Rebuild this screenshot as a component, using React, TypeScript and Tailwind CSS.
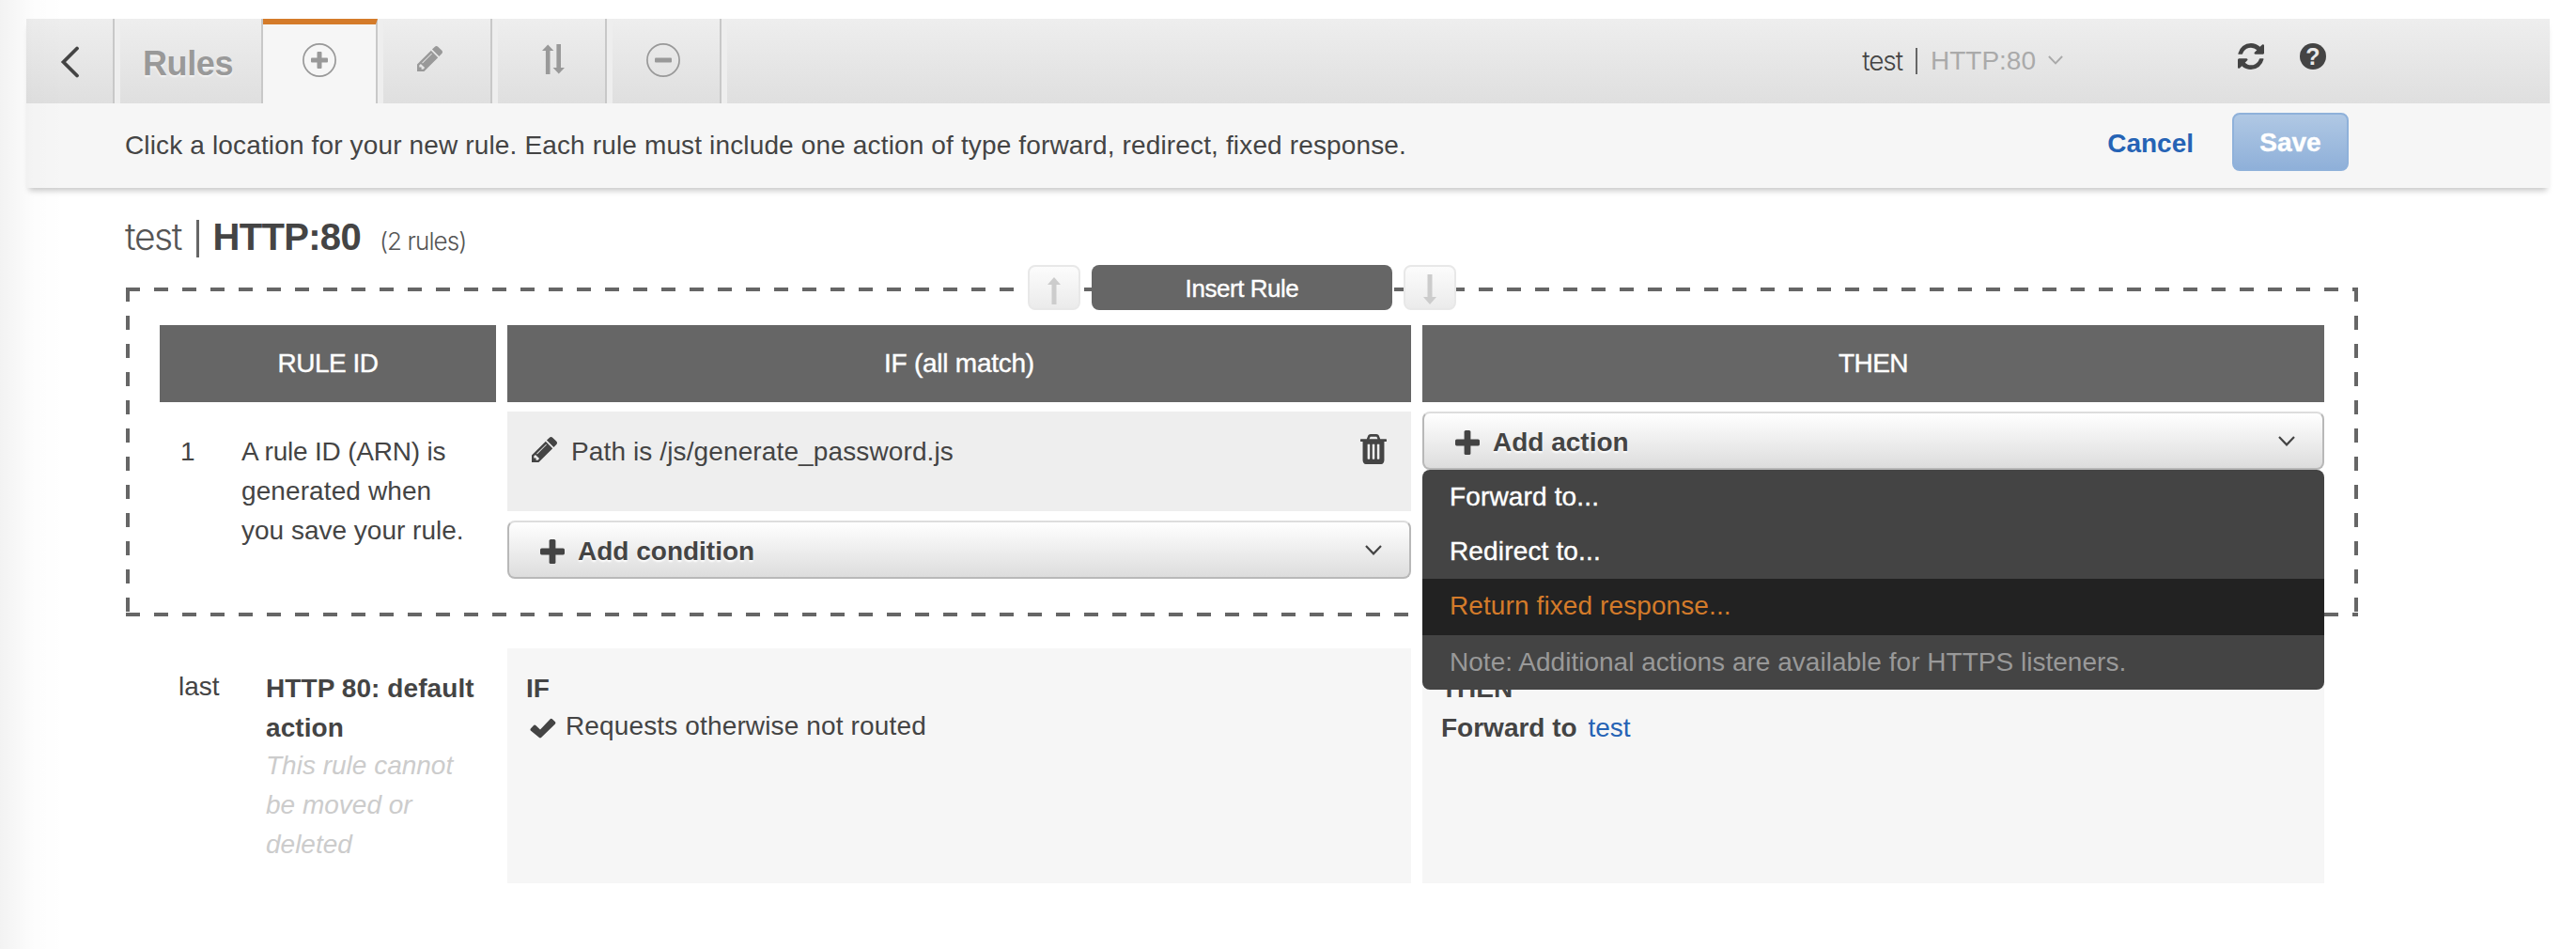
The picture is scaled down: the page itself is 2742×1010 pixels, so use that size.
import React from "react";

const PENCIL =
  "M491 1536l91-91-235-235-91 91v107h128v128h107zm523-928q0-22-22-22-10 0-17 7l-542 542q-7 7-7 17 0 22 22 22 10 0 17-7l542-542q7-7 7-17zm-54-192l416 416-832 832h-416v-416zm683 96q0 53-37 90l-166 166-416-416 166-165q36-38 90-38 53 0 91 38l235 234q37 39 37 91z";
const TRASH =
  "M704 1376v-704q0-14-9-23t-23-9h-64q-14 0-23 9t-9 23v704q0 14 9 23t23 9h64q14 0 23-9t9-23zm256 0v-704q0-14-9-23t-23-9h-64q-14 0-23 9t-9 23v704q0 14 9 23t23 9h64q14 0 23-9t9-23zm256 0v-704q0-14-9-23t-23-9h-64q-14 0-23 9t-9 23v704q0 14 9 23t23 9h64q14 0 23-9t9-23zm-544-992h448l-48-117q-7-9-17-11h-317q-10 2-17 11zm928 32v64q0 14-9 23t-23 9h-96v948q0 83-47 143.5t-113 60.5h-832q-66 0-113-58.5t-47-141.5v-952h-96q-14 0-23-9t-9-23v-64q0-14 9-23t23-9h309l70-167q15-37 54-63t79-26h320q40 0 79 26t54 63l70 167h309q14 0 23 9t9 23z";
const REFRESH =
  "M1639 1056q0 5-1 7-64 268-268 434.5t-478 166.5q-146 0-282.5-55t-243.5-157l-129 129q-19 19-45 19t-45-19-19-45v-448q0-26 19-45t45-19h448q26 0 45 19t19 45-19 45l-137 137q71 66 161 102t187 36q134 0 250-65t186-179q11-17 53-117 8-23 30-23h192q13 0 22.5 9.5t9.5 22.5zm25-800v448q0 26-19 45t-45 19h-448q-26 0-45-19t-19-45 19-45l138-138q-148-137-349-137-134 0-250 65t-186 179q-11 17-53 117-8 23-30 23h-199q-13 0-22.5-9.5t-9.5-22.5v-7q65-268 270-434.5t480-166.5q146 0 284 55.5t245 156.5l130-129q19-19 45-19t45 19 19 45z";

function Glyph({ d, box, className }: { d: string; box: string; className: string }) {
  return (
    <svg viewBox={box} className={className} fill="currentColor" preserveAspectRatio="none">
      <path d={d} />
    </svg>
  );
}

function Pencil({ className }: { className: string }) {
  return <Glyph d={PENCIL} box="128 149 1515 1515" className={className} />;
}

function Chevron({ className, stroke = 2.2 }: { className: string; stroke?: number }) {
  return (
    <svg viewBox="0 0 18 11" className={className} fill="none" stroke="currentColor" strokeWidth={stroke}>
      <path d="M1 1l8 8.3L17 1" />
    </svg>
  );
}

function CircleIcon({ plus }: { plus?: boolean }) {
  return (
    <svg viewBox="0 0 36 36" className="size-9" fill="#999">
      <circle cx="18" cy="18" r="17.1" fill="none" stroke="#999" strokeWidth="1.7" />
      <rect x="9" y="15.500" width="18" height="5" rx="1" />
      {plus && <rect x="15.500" y="9" width="5" height="18" rx="1" />}
    </svg>
  );
}

function Plus({ className }: { className: string }) {
  return (
    <svg viewBox="0 0 26 26" className={className} fill="#444">
      <rect x="9.6" y="0" width="6.8" height="26" rx="1.6" />
      <rect x="0" y="9.6" width="26" height="6.8" rx="1.6" />
    </svg>
  );
}

const TAB =
  "flex h-[90px] w-[122px] shrink-0 justify-center border-r-2 border-[#c8c8c8] pt-[26px] text-[#999] shadow-[inset_6px_0_0_#eeeeee]";

function Toolbar() {
  return (
    <div className="flex h-[90px] bg-linear-to-b from-[#eeeeee] to-[#dfdfdf]">
      <div className="flex h-[90px] w-[94px] shrink-0 border-r-2 border-[#c8c8c8] pl-[36px] pt-[29px]">
        <svg
          viewBox="0 0 22 34"
          className="h-[34px] w-[22px]"
          fill="none"
          stroke="#444"
          strokeWidth="3.8"
          strokeLinecap="round"
        >
          <path d="M18 2.500L3.500 17l14.500 14.500" />
        </svg>
      </div>
      <div className="h-[90px] w-[158px] shrink-0 border-r-2 border-[#c8c8c8] pl-[30px] pt-[27px] text-[36px] leading-[42px] font-bold tracking-[-0.4px] text-[#999] shadow-[inset_6px_0_0_#eeeeee] [text-shadow:0_2px_2px_#f4f4f4]">
        Rules
      </div>
      <div className="flex h-[90px] w-[122px] shrink-0 justify-center border-t-[6px] border-r-2 border-t-[#d47b2a] border-r-[#c8c8c8] bg-[#f6f6f6] pt-5">
        <CircleIcon plus />
      </div>
      <div className={TAB}>
        <Pencil className="mt-[3px] ml-[-10px] size-[27px]" />
      </div>
      <div className={TAB}>
        <svg viewBox="0 0 24 32" className="mt-[1px] mr-[-10px] h-8 w-6" fill="#999">
          <path d="M6.200 0.500L12.400 7H8.500V32H3.900V7H0Z" />
          <path d="M17.800 31.500L24 25H20V0H15.400V25H11.600Z" />
        </svg>
      </div>
      <div className={TAB}>
        <CircleIcon />
      </div>
      <div className="flex grow shadow-[inset_6px_0_0_#eeeeee]">
        <div className="ml-auto flex pt-6 pr-[238px] text-[28px] leading-[42px]">
          <span className="font-['Inter'] font-light tracking-[-1.1px] text-[#444]">test</span>
          <span className="ml-[14px] mr-[14px] mt-[7px] h-7 w-0.5 bg-[#666]" />
          <span className="mr-[13px] text-[#aaa]">HTTP:80</span>
          <Chevron className="mt-[15px] mr-[186px] h-[10px] w-4 text-[#aaa]" />
          <Glyph d={REFRESH} box="128 128 1536 1536" className="mt-[2px] mr-[38px] size-7 text-[#444]" />
          <span className="mt-[2px] flex size-7 items-center justify-center rounded-full bg-[#444] text-[25px] leading-7 font-bold text-[#eaeaea]">
            ?
          </span>
        </div>
      </div>
    </div>
  );
}

function DropButton({ label }: { label: string }) {
  return (
    <div className="flex h-[62px] shrink-0 rounded-lg border-2 border-[#b8b8b8] border-t-[#dddddd] bg-linear-to-b from-white to-[#dddddd] pr-[29px] pl-[33px] text-[28px] leading-[42px] font-bold text-[#444]">
      <Plus className="mt-[18px] mr-[14px] size-[26px]" />
      <span className="pt-[10px] [text-shadow:0_2px_2px_#fff]">{label}</span>
      <Chevron className="mt-[24px] ml-auto h-[11px] w-[18px]" />
    </div>
  );
}

function Arrow({ down }: { down?: boolean }) {
  return (
    <div className="flex h-12 w-14 justify-center rounded-lg border-2 border-[#e8e8e8] bg-linear-to-b from-[#fcfcfc] to-[#ebebeb]">
      <svg viewBox="0 0 14 32" className={down ? "mt-2 h-8 w-3.5" : "mt-[11px] h-8 w-3.5"} fill="#ccc">
        <path d={down ? "M7 32L14 24H9.500V0H4.500V24H0Z" : "M7 0L14 8H9.500V29H4.500V8H0Z"} />
      </svg>
    </div>
  );
}

const HEAD =
  "flex h-[82px] items-center justify-center bg-[#666] text-[28px] leading-[42px] text-white [-webkit-text-stroke:0.4px_#fff]";
const DASH_X =
  "h-1 w-full shrink-0 bg-[repeating-linear-gradient(90deg,#666_0,#666_15px,transparent_15px,transparent_30px)]";
const DASH_Y =
  "w-1 shrink-0 bg-[repeating-linear-gradient(180deg,#666_0,#666_15px,transparent_15px,transparent_30px)]";

function ActionMenu() {
  return (
    <div className="absolute top-[62px] left-0 z-10 w-full overflow-hidden rounded-lg bg-[#444] text-[28px] leading-[42px] text-white">
      <div className="h-[58px] pt-2 pl-[29px] tracking-[0.15px] [-webkit-text-stroke:0.4px_#fff]">Forward to...</div>
      <div className="h-[58px] pt-2 pl-[29px] tracking-[0.15px] [-webkit-text-stroke:0.4px_#fff]">Redirect to...</div>
      <div className="h-[60px] bg-[#222] pt-2 pl-[29px] tracking-[0.1px] text-[#d47b2a]">Return fixed response...</div>
      <div className="h-[58px] pt-2 pl-[29px] tracking-[0.02px] text-[#999]">
        Note: Additional actions are available for HTTPS listeners.
      </div>
    </div>
  );
}

function NewRule() {
  return (
    <section className="relative ml-[134px] flex h-[350px] w-[2376px] flex-col">
      <div className={DASH_X} />
      <div className="-mt-1 flex h-[346px] shrink-0 justify-between">
        <div className={DASH_Y} />
        <div className="mt-10 grid w-[2304px] grid-cols-[358px_962px_960px] grid-rows-[82px_1fr] gap-x-3 gap-y-[10px]">
          <div className={HEAD}>
            <span className="tracking-[-0.5px]">RULE ID</span>
          </div>
          <div className={HEAD}>
            <span className="tracking-[-0.25px]">IF (all match)</span>
          </div>
          <div className={HEAD}>
            <span className="tracking-[-0.6px]">THEN</span>
          </div>
          <div className="flex pt-[22px] pl-[22px] text-[28px] leading-[42px] text-[#444]">
            <span className="w-[65px] shrink-0">1</span>
            <p>
              <span className="tracking-[-0.2px]">A rule ID (ARN) is</span>
              <br />
              <span className="tracking-[0.1px]">generated when</span>
              <br />
              you save your rule.
            </p>
          </div>
          <div className="flex flex-col gap-[10px]">
            <div className="flex h-[106px] bg-[#eee] pr-[26px] pl-[26px] text-[28px] leading-[42px] text-[#444]">
              <Pencil className="mt-[27px] mr-[15px] size-[27px]" />
              <span className="pt-[22px] tracking-[0.12px]">Path is /js/generate_password.js</span>
              <Glyph d={TRASH} box="192 128 1408 1536" className="mt-[24px] ml-auto h-8 w-7" />
            </div>
            <DropButton label="Add condition" />
          </div>
          <div className="relative">
            <DropButton label="Add action" />
            <ActionMenu />
          </div>
        </div>
        <div className={DASH_Y} />
      </div>
      <div className={DASH_X} />
      <div className="absolute -top-6 left-[960px] flex">
        <Arrow />
        <div className="mx-3 h-12 w-80 rounded-lg bg-[#666] pt-px text-center text-[26px] leading-[48px] tracking-[-0.45px] text-white [-webkit-text-stroke:0.4px_#fff]">
          Insert Rule
        </div>
        <Arrow down />
      </div>
    </section>
  );
}

function DefaultRule() {
  return (
    <section className="mt-[34px] ml-[170px] grid h-[250px] w-[2304px] grid-cols-[358px_962px_960px] gap-x-3 text-[28px] leading-[42px] text-[#444]">
      <div className="flex pt-5 pl-[20px]">
        <span className="w-[93px] shrink-0">last</span>
        <div className="pt-[2px]">
          <p className="font-bold tracking-[0.08px]">
            HTTP 80: default
            <br />
            action
          </p>
          <p className="-mt-0.5 text-[#ccc] italic">
            This rule cannot
            <br />
            be moved or
            <br />
            deleted
          </p>
        </div>
      </div>
      <div className="bg-[#f6f6f6] pt-[22px] pl-[20px]">
        <p className="font-bold">IF</p>
        <p className="-mt-0.5 flex tracking-[0.14px]">
          <svg viewBox="0 0 28 22" className="mt-[12px] mr-[10px] ml-1 h-[22px] w-7" fill="#444">
            <path d="M0.800 11.500L4.300 7.800Q5.300 7 6.300 7.900L11 12.500L21.700 1.200Q22.800 0.300 23.800 1.200L27 4.300Q27.900 5.300 27 6.400L12 21Q11 21.900 10 21L0.800 13.500Q0 12.500 0.800 11.500Z" />
          </svg>
          Requests otherwise not routed
        </p>
      </div>
      <div className="bg-[#f6f6f6] pt-[22px] pl-[20px]">
        <p className="font-bold">THEN</p>
        <p>
          <b>Forward to</b> <span className="ml-1 text-[#2563b5]">test</span>
        </p>
      </div>
    </section>
  );
}

export default function App() {
  return (
    <main className="relative h-[1010px] w-[2742px] overflow-hidden bg-white pt-5 font-['Liberation_Sans',Arial,sans-serif]">
      <header className="mr-7 ml-7 h-[180px] bg-[#f6f6f6] shadow-[0_6px_6px_-3px_rgba(0,0,0,0.22)]">
        <Toolbar />
        <div className="flex h-[90px] pr-[214px] pl-[105px] text-[28px] leading-[42px] text-[#444]">
          <p className="pt-6 tracking-[0.145px]">
            Click a location for your new rule. Each rule must include one action of type forward, redirect, fixed
            response.
          </p>
          <span className="mr-[41px] ml-auto pt-[22px] font-bold text-[#2563b5]">Cancel</span>
          <button className="mt-[10px] h-[62px] w-[124px] rounded-lg border-2 border-[#8fb1da] bg-linear-to-b from-[#b0c8e4] to-[#8fb0d9] pt-0.5 text-[28px] font-bold text-white [-webkit-text-stroke:0.4px_#fff]">
            Save
          </button>
        </div>
      </header>
      <h1 className="mt-[22px] mb-[24px] flex h-[60px] items-baseline pl-[133px] text-[40px] leading-[60px] text-[#444]">
        <span className="font-['Inter'] text-[39px] font-light tracking-[-1.4px] text-[#555]">test</span>
        <span className="mr-[15px] ml-[16px] h-10 w-[2.5px] translate-y-2 bg-[#666]" />
        <span className="font-bold tracking-[-0.7px]">HTTP:80</span>
        <span className="ml-5 font-['Inter'] text-[26px] font-light tracking-[-0.9px] text-[#555]">(2 rules)</span>
      </h1>
      <NewRule />
      <DefaultRule />
      <div className="absolute inset-y-0 left-0 w-[70px] bg-linear-to-r from-black/5 via-black/1 to-transparent" />
    </main>
  );
}
